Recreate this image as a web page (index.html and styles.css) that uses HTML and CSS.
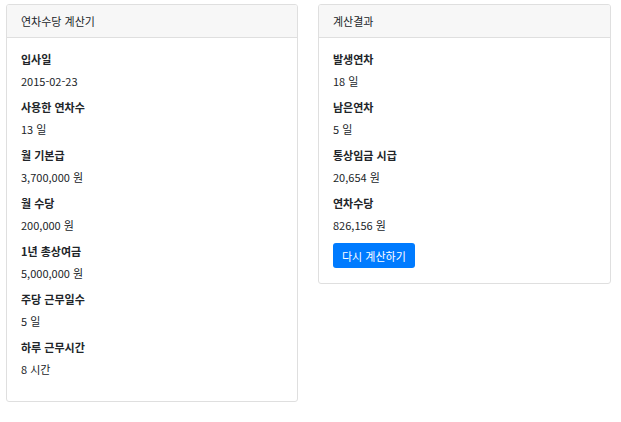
FILE: index.html
```html
<!DOCTYPE html>
<html lang="ko">
	<head>
		<meta charset="UTF-8">
		<title>연차수당 계산기</title>
		<link rel="stylesheet" href="styles.css">
	</head>
	<body>
		<div class="wrap">
			<div class="card">
				<div class="card-header">연차수당 계산기</div>
				<div class="card-body">
					<div class="label">입사일</div>
					<div class="value">2015-02-23</div>
					<div class="label">사용한 연차수</div>
					<div class="value">13 일</div>
					<div class="label">월 기본급</div>
					<div class="value">3,700,000 원</div>
					<div class="label">월 수당</div>
					<div class="value">200,000 원</div>
					<div class="label">1년 총상여금</div>
					<div class="value">5,000,000 원</div>
					<div class="label">주당 근무일수</div>
					<div class="value">5 일</div>
					<div class="label">하루 근무시간</div>
					<div class="value">8 시간</div>
				</div>
			</div>
			<div class="card">
				<div class="card-header">계산결과</div>
				<div class="card-body">
					<div class="label">발생연차</div>
					<div class="value">18 일</div>
					<div class="label">남은연차</div>
					<div class="value">5 일</div>
					<div class="label">통상임금 시급</div>
					<div class="value">20,654 원</div>
					<div class="label">연차수당</div>
					<div class="value">826,156 원</div>
					<button class="btn">다시 계산하기</button>
				</div>
			</div>
		</div>
	</body>
</html>
```
FILE: styles.css
```css
body{
	margin: 0;
	font-family: "Noto Sans CJK KR", "Noto Sans", sans-serif;
	font-size: 11px;
	color: #212529;
	background: #fff;
}
.wrap{
	display: grid;
	grid-template-columns: 292px 293px;
	gap: 20px;
	align-items: start;
	padding: 4px 0 0 6px;
}
.card{
	border: 1px solid #dfdfdf;
	border-radius: 3px;
	overflow: hidden;
}
.card-header{
	height: 32px;
	line-height: 32px;
	padding: 0 14px;
	background-color: #f7f7f7;
	border-bottom: 1px solid #dfdfdf;
}
.card-body{
	padding: 12px 14px 15px;
}
.label{
	font-weight: bold;
	line-height: 18px;
	margin-bottom: 4px;
}
.value{
	line-height: 18px;
	margin-bottom: 8px;
}
.btn{
	display: block;
	height: 25px;
	padding: 0 9px;
	border: none;
	border-radius: 3px;
	background-color: #007bff;
	color: #fff;
	font-family: inherit;
	font-size: 11px;
	margin-top: 9px;
}
```
